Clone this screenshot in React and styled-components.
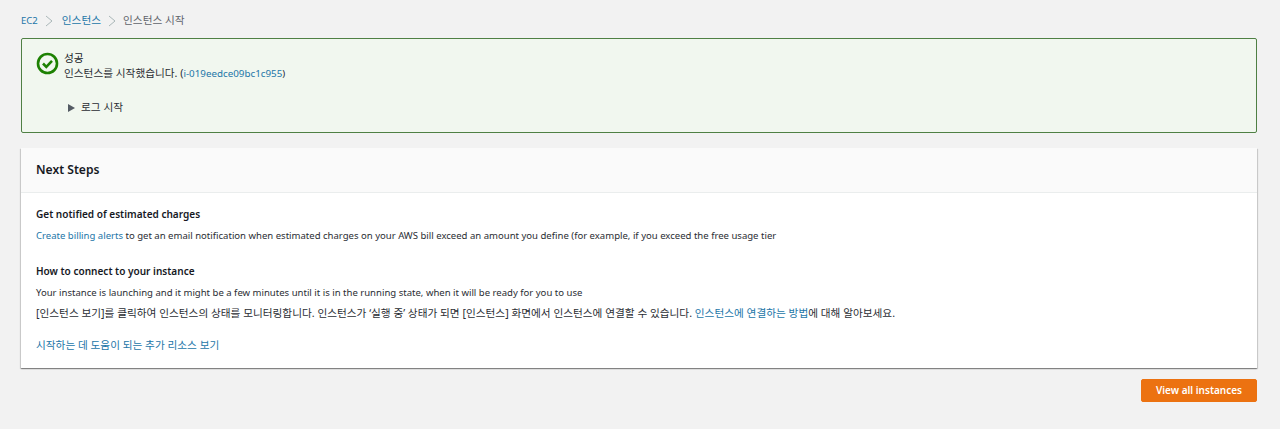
import styled, { createGlobalStyle } from "styled-components";

const GlobalStyle = createGlobalStyle`
  html, body {
    margin: 0;
    padding: 0;
    background: #f2f2f2;
    font-family: "Noto Sans", "Noto Sans CJK KR", sans-serif;
    font-size: 9.55px;
    color: #2a2d33;
  }
`;

const Page = styled.div`
  width: 1280px;
  height: 429px;
  box-sizing: border-box;
  padding: 14px 23px 0 21px;
  overflow: hidden;
`;

// Korean runs are set a little larger than the latin text around them
const Ko = styled.span`
  font-size: 10.67px;
`;

const Breadcrumbs = styled.nav`
  display: flex;
  align-items: center;
  height: 13px;
  line-height: 13px;
  margin-bottom: 11px;
`;

const Crumb = styled.span`
  color: ${(p) => (p.$current ? "#5f646b" : "#2376a8")};
`;

const Chevron = styled.svg`
  width: 8px;
  height: 12px;
  margin: 0 ${(p) => p.$right}px 0 7px;
  fill: none;
  stroke: #aab7b8;
  stroke-width: 1;
`;

const Link = styled.a`
  color: #2376a8;
`;

const Flash = styled.section`
  box-sizing: border-box;
  height: 95px;
  border: 1px solid #4f8044;
  border-radius: 2px;
  background: #f1f7ef;
  padding: 12px 14px;
  display: flex;
  gap: 5px;
  margin-bottom: 15px;
  font-size: 9.8px;
`;

const FlashIcon = styled.svg`
  width: 23px;
  height: 23px;
  flex: none;
  margin-top: 1px;
`;

const FlashBody = styled.div`
  line-height: 15px;
`;

const FlashTitle = styled.div`
  color: #16191f;
`;

const LogToggle = styled.div`
  display: flex;
  align-items: center;
  gap: 6px;
  margin-top: 19px;
  padding-left: 4px;
`;

const Caret = styled.span`
  width: 0;
  height: 0;
  border-left: 7px solid #545b64;
  border-top: 4px solid transparent;
  border-bottom: 4px solid transparent;
`;

const Card = styled.section`
  background: #fff;
  box-shadow: 0 1px 1px 0 rgba(0, 0, 0, 0.3), 1px 1px 1px 0 rgba(0, 0, 0, 0.12),
    -1px 1px 1px 0 rgba(0, 0, 0, 0.12);
  height: 220px;
  margin-bottom: 11px;
`;

const CardHeader = styled.header`
  box-sizing: border-box;
  height: 45px;
  background: #fafafa;
  border-bottom: 1px solid #eaeded;
  padding: 0 15px 2px;
  display: flex;
  align-items: center;
  font-size: 12.1px;
  font-weight: 600;
  color: #16191f;
`;

const CardBody = styled.div`
  padding: 14px 15px 0;
`;

const Heading = styled.h3`
  margin: 0 0 ${(p) => p.$after}px;
  font-size: 10.05px;
  line-height: 14px;
  font-weight: 600;
  color: #16191f;
`;

const Paragraph = styled.p`
  margin: 0 0 ${(p) => p.$after ?? 0}px;
  line-height: 14px;
`;

const Actions = styled.div`
  display: flex;
  justify-content: flex-end;
`;

const PrimaryButton = styled.button`
  width: 116px;
  height: 23px;
  padding: 0 0 1px;
  border: 1px solid #ec7211;
  border-radius: 2px;
  background: #ec7211;
  color: #fff;
  font-family: inherit;
  font-size: 10px;
  font-weight: 600;
`;

function SuccessIcon() {
  return (
    <FlashIcon viewBox="0 0 23 23" fill="none" stroke="#1d8102">
      <circle cx="11.5" cy="11.5" r="9.5" strokeWidth="2.6" />
      <path d="M7 11.5l3.3 3.3L16 8.8" strokeWidth="2.6" />
    </FlashIcon>
  );
}

function Separator({ right }) {
  return (
    <Chevron viewBox="0 0 8 12" $right={right}>
      <path d="M1 1l6 5-6 5" />
    </Chevron>
  );
}

export default function App() {
  return (
    <Page>
      <GlobalStyle />
      <Breadcrumbs>
        <Crumb>EC2</Crumb>
        <Separator right={9} />
        <Crumb><Ko>인스턴스</Ko></Crumb>
        <Separator right={7} />
        <Crumb $current><Ko>인스턴스 시작</Ko></Crumb>
      </Breadcrumbs>

      <Flash>
        <SuccessIcon />
        <FlashBody>
          <FlashTitle><Ko>성공</Ko></FlashTitle>
          <div>
            <Ko>인스턴스를 시작했습니다. (</Ko><Link>i-019eedce09bc1c955</Link>)
          </div>
          <LogToggle>
            <Caret />
            <Ko>로그 시작</Ko>
          </LogToggle>
        </FlashBody>
      </Flash>

      <Card>
        <CardHeader>Next Steps</CardHeader>
        <CardBody>
          <Heading $after={8}>Get notified of estimated charges</Heading>
          <Paragraph $after={21}>
            <Link>Create billing alerts</Link> to get an email notification when
            estimated charges on your AWS bill exceed an amount you define (for
            example, if you exceed the free usage tier
          </Paragraph>
          <Heading $after={8}>How to connect to your instance</Heading>
          <Paragraph $after={6}>
            Your instance is launching and it might be a few minutes until it is
            in the running state, when it will be ready for you to use
          </Paragraph>
          <Paragraph $after={17}>
            <Ko>
              [인스턴스 보기]를 클릭하여 인스턴스의 상태를 모니터링합니다. 인스턴스가
              ‘실행 중’ 상태가 되면 [인스턴스] 화면에서 인스턴스에 연결할 수 있습니다.{" "}
              <Link>인스턴스에 연결하는 방법</Link>에 대해 알아보세요.
            </Ko>
          </Paragraph>
          <Paragraph>
            <Link><Ko>시작하는 데 도움이 되는 추가 리소스 보기</Ko></Link>
          </Paragraph>
        </CardBody>
      </Card>

      <Actions>
        <PrimaryButton>View all instances</PrimaryButton>
      </Actions>
    </Page>
  );
}
